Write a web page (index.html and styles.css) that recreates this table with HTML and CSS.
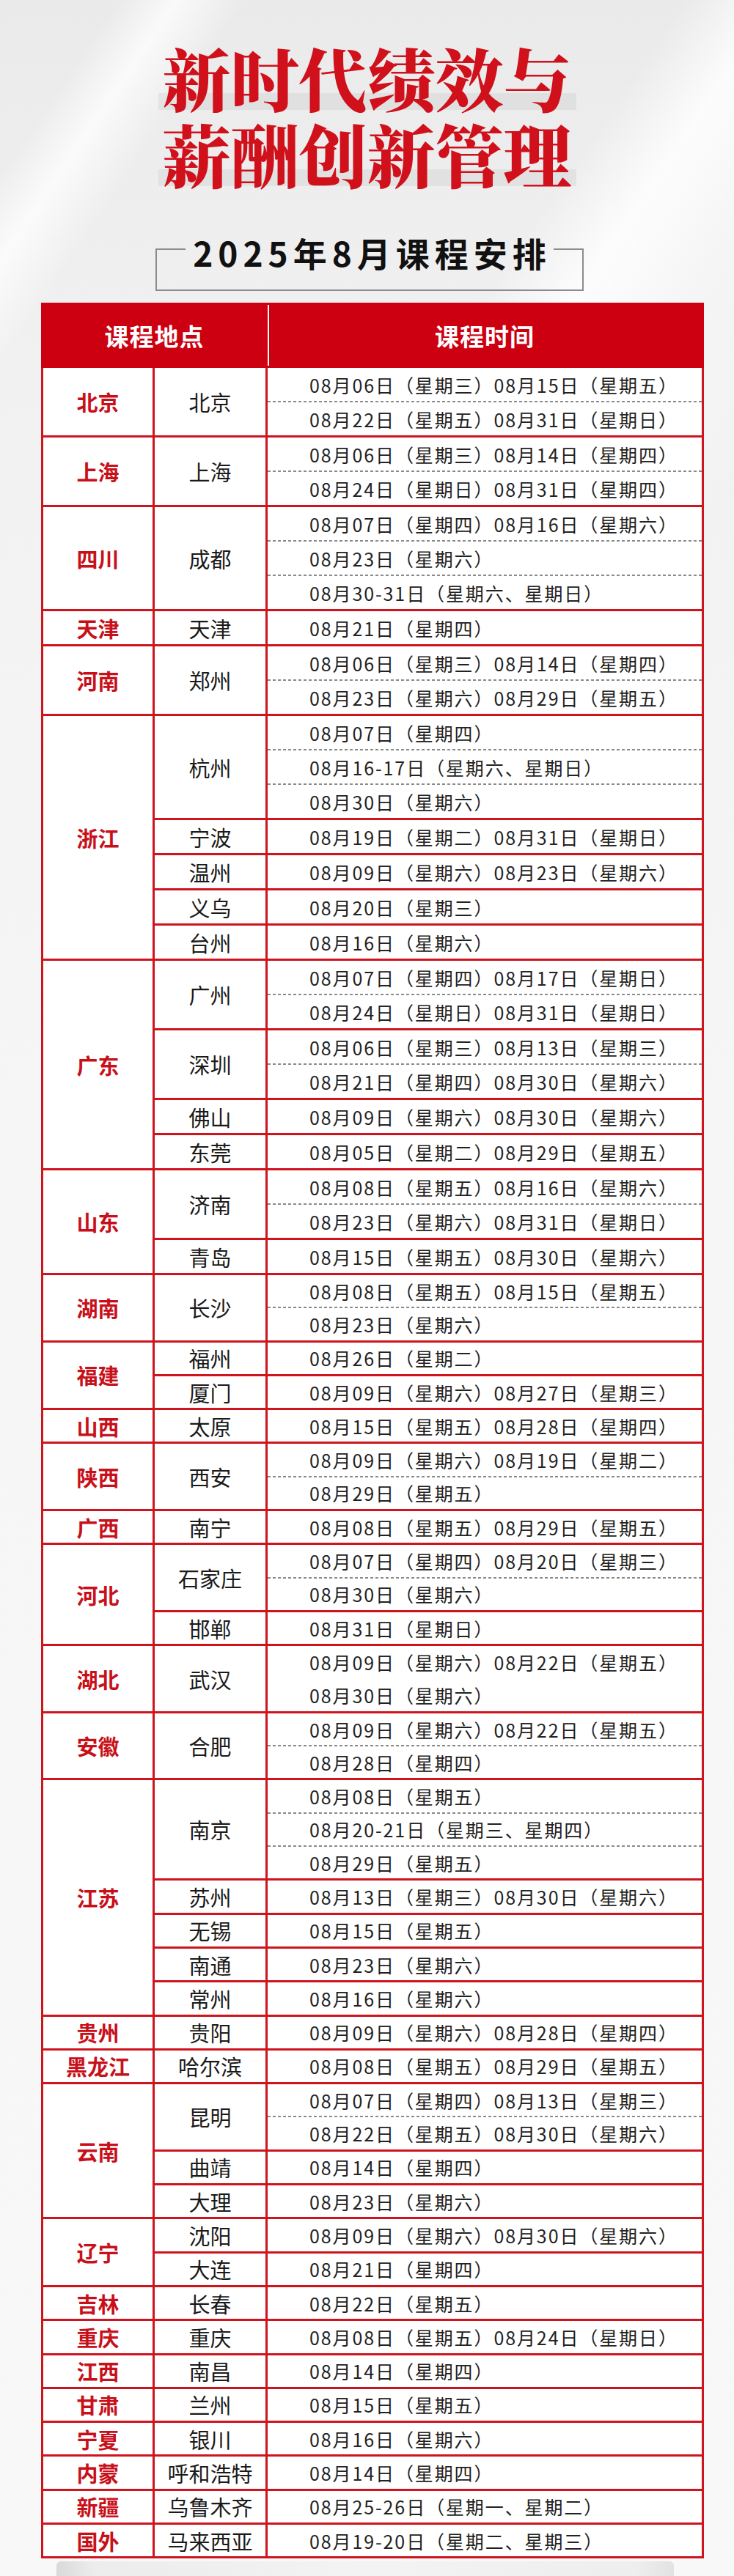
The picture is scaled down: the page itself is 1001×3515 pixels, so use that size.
FILE: index.html
```html
<!DOCTYPE html>
<html lang="zh-CN">
<head>
<meta charset="utf-8">
<title>新时代绩效与薪酬创新管理 · 2025年8月课程安排</title>
<link rel="stylesheet" href="styles.css">
</head>
<body>
<main class="page">
  <h1 class="title">新时代绩效与<br>薪酬创新管理</h1>

  <fieldset class="schedule-frame">
    <legend class="schedule-heading">2025年8月课程安排</legend>
  </fieldset>

  <table class="schedule">
    <colgroup>
      <col class="col-prov">
      <col class="col-city">
      <col class="col-time">
    </colgroup>
    <thead>
      <tr>
        <th colspan="2" class="head-place">课程地点</th>
        <th class="head-time">课程时间</th>
      </tr>
    </thead>
    <tbody>
      <tr>
        <td class="prov">北京</td><td class="city">北京</td>
        <td class="time"><div class="line">08月06日（星期三）08月15日（星期五）</div><div class="line">08月22日（星期五）08月31日（星期日）</div></td>
      </tr>
      <tr>
        <td class="prov">上海</td><td class="city">上海</td>
        <td class="time"><div class="line">08月06日（星期三）08月14日（星期四）</div><div class="line">08月24日（星期日）08月31日（星期四）</div></td>
      </tr>
      <tr>
        <td class="prov">四川</td><td class="city">成都</td>
        <td class="time"><div class="line">08月07日（星期四）08月16日（星期六）</div><div class="line">08月23日（星期六）</div><div class="line">08月30-31日（星期六、星期日）</div></td>
      </tr>
      <tr>
        <td class="prov">天津</td><td class="city">天津</td>
        <td class="time"><div class="line">08月21日（星期四）</div></td>
      </tr>
      <tr>
        <td class="prov">河南</td><td class="city">郑州</td>
        <td class="time"><div class="line">08月06日（星期三）08月14日（星期四）</div><div class="line">08月23日（星期六）08月29日（星期五）</div></td>
      </tr>
      <tr>
        <td class="prov" rowspan="5">浙江</td><td class="city">杭州</td>
        <td class="time"><div class="line">08月07日（星期四）</div><div class="line">08月16-17日（星期六、星期日）</div><div class="line">08月30日（星期六）</div></td>
      </tr>
      <tr>
        <td class="city">宁波</td>
        <td class="time"><div class="line">08月19日（星期二）08月31日（星期日）</div></td>
      </tr>
      <tr>
        <td class="city">温州</td>
        <td class="time"><div class="line">08月09日（星期六）08月23日（星期六）</div></td>
      </tr>
      <tr>
        <td class="city">义乌</td>
        <td class="time"><div class="line">08月20日（星期三）</div></td>
      </tr>
      <tr>
        <td class="city">台州</td>
        <td class="time"><div class="line">08月16日（星期六）</div></td>
      </tr>
      <tr>
        <td class="prov" rowspan="4">广东</td><td class="city">广州</td>
        <td class="time"><div class="line">08月07日（星期四）08月17日（星期日）</div><div class="line">08月24日（星期日）08月31日（星期日）</div></td>
      </tr>
      <tr>
        <td class="city">深圳</td>
        <td class="time"><div class="line">08月06日（星期三）08月13日（星期三）</div><div class="line">08月21日（星期四）08月30日（星期六）</div></td>
      </tr>
      <tr>
        <td class="city">佛山</td>
        <td class="time"><div class="line">08月09日（星期六）08月30日（星期六）</div></td>
      </tr>
      <tr>
        <td class="city">东莞</td>
        <td class="time"><div class="line">08月05日（星期二）08月29日（星期五）</div></td>
      </tr>
      <tr>
        <td class="prov" rowspan="2">山东</td><td class="city">济南</td>
        <td class="time"><div class="line">08月08日（星期五）08月16日（星期六）</div><div class="line">08月23日（星期六）08月31日（星期日）</div></td>
      </tr>
      <tr>
        <td class="city">青岛</td>
        <td class="time"><div class="line">08月15日（星期五）08月30日（星期六）</div></td>
      </tr>
      <tr>
        <td class="prov">湖南</td><td class="city">长沙</td>
        <td class="time"><div class="line">08月08日（星期五）08月15日（星期五）</div><div class="line">08月23日（星期六）</div></td>
      </tr>
      <tr>
        <td class="prov" rowspan="2">福建</td><td class="city">福州</td>
        <td class="time"><div class="line">08月26日（星期二）</div></td>
      </tr>
      <tr>
        <td class="city">厦门</td>
        <td class="time"><div class="line">08月09日（星期六）08月27日（星期三）</div></td>
      </tr>
      <tr>
        <td class="prov">山西</td><td class="city">太原</td>
        <td class="time"><div class="line">08月15日（星期五）08月28日（星期四）</div></td>
      </tr>
      <tr>
        <td class="prov">陕西</td><td class="city">西安</td>
        <td class="time"><div class="line">08月09日（星期六）08月19日（星期二）</div><div class="line">08月29日（星期五）</div></td>
      </tr>
      <tr>
        <td class="prov">广西</td><td class="city">南宁</td>
        <td class="time"><div class="line">08月08日（星期五）08月29日（星期五）</div></td>
      </tr>
      <tr>
        <td class="prov" rowspan="2">河北</td><td class="city">石家庄</td>
        <td class="time"><div class="line">08月07日（星期四）08月20日（星期三）</div><div class="line">08月30日（星期六）</div></td>
      </tr>
      <tr>
        <td class="city">邯郸</td>
        <td class="time"><div class="line">08月31日（星期日）</div></td>
      </tr>
      <tr>
        <td class="prov">湖北</td><td class="city">武汉</td>
        <td class="time time--plain"><div class="line">08月09日（星期六）08月22日（星期五）</div><div class="line">08月30日（星期六）</div></td>
      </tr>
      <tr>
        <td class="prov">安徽</td><td class="city">合肥</td>
        <td class="time"><div class="line">08月09日（星期六）08月22日（星期五）</div><div class="line">08月28日（星期四）</div></td>
      </tr>
      <tr>
        <td class="prov" rowspan="5">江苏</td><td class="city">南京</td>
        <td class="time"><div class="line">08月08日（星期五）</div><div class="line">08月20-21日（星期三、星期四）</div><div class="line">08月29日（星期五）</div></td>
      </tr>
      <tr>
        <td class="city">苏州</td>
        <td class="time"><div class="line">08月13日（星期三）08月30日（星期六）</div></td>
      </tr>
      <tr>
        <td class="city">无锡</td>
        <td class="time"><div class="line">08月15日（星期五）</div></td>
      </tr>
      <tr>
        <td class="city">南通</td>
        <td class="time"><div class="line">08月23日（星期六）</div></td>
      </tr>
      <tr>
        <td class="city">常州</td>
        <td class="time"><div class="line">08月16日（星期六）</div></td>
      </tr>
      <tr>
        <td class="prov">贵州</td><td class="city">贵阳</td>
        <td class="time"><div class="line">08月09日（星期六）08月28日（星期四）</div></td>
      </tr>
      <tr>
        <td class="prov">黑龙江</td><td class="city">哈尔滨</td>
        <td class="time"><div class="line">08月08日（星期五）08月29日（星期五）</div></td>
      </tr>
      <tr>
        <td class="prov" rowspan="3">云南</td><td class="city">昆明</td>
        <td class="time"><div class="line">08月07日（星期四）08月13日（星期三）</div><div class="line">08月22日（星期五）08月30日（星期六）</div></td>
      </tr>
      <tr>
        <td class="city">曲靖</td>
        <td class="time"><div class="line">08月14日（星期四）</div></td>
      </tr>
      <tr>
        <td class="city">大理</td>
        <td class="time"><div class="line">08月23日（星期六）</div></td>
      </tr>
      <tr>
        <td class="prov" rowspan="2">辽宁</td><td class="city">沈阳</td>
        <td class="time"><div class="line">08月09日（星期六）08月30日（星期六）</div></td>
      </tr>
      <tr>
        <td class="city">大连</td>
        <td class="time"><div class="line">08月21日（星期四）</div></td>
      </tr>
      <tr>
        <td class="prov">吉林</td><td class="city">长春</td>
        <td class="time"><div class="line">08月22日（星期五）</div></td>
      </tr>
      <tr>
        <td class="prov">重庆</td><td class="city">重庆</td>
        <td class="time"><div class="line">08月08日（星期五）08月24日（星期日）</div></td>
      </tr>
      <tr>
        <td class="prov">江西</td><td class="city">南昌</td>
        <td class="time"><div class="line">08月14日（星期四）</div></td>
      </tr>
      <tr>
        <td class="prov">甘肃</td><td class="city">兰州</td>
        <td class="time"><div class="line">08月15日（星期五）</div></td>
      </tr>
      <tr>
        <td class="prov">宁夏</td><td class="city">银川</td>
        <td class="time"><div class="line">08月16日（星期六）</div></td>
      </tr>
      <tr>
        <td class="prov">内蒙</td><td class="city">呼和浩特</td>
        <td class="time"><div class="line">08月14日（星期四）</div></td>
      </tr>
      <tr>
        <td class="prov">新疆</td><td class="city">乌鲁木齐</td>
        <td class="time"><div class="line">08月25-26日（星期一、星期二）</div></td>
      </tr>
      <tr>
        <td class="prov">国外</td><td class="city">马来西亚</td>
        <td class="time"><div class="line">08月19-20日（星期二、星期三）</div></td>
      </tr>
    </tbody>
  </table>

  <div class="photo-peek"></div>
</main>
</body>
</html>
```

FILE: styles.css
```css
* {
  box-sizing: border-box;
}

html,
body {
  margin: 0;
}

body {
  width: 1001px;
  min-height: 3515px;
  font-family: "Noto Sans CJK SC", "Noto Sans", "Liberation Sans", sans-serif;
  color: #1c1c1c;
  background:
    linear-gradient(124deg, transparent 0 10%, rgba(255, 255, 255, 0.75) 15%, transparent 21%) 0 0 / 1001px 900px no-repeat,
    linear-gradient(124deg, transparent 0 58%, rgba(255, 255, 255, 0.85) 66%, rgba(250, 250, 250, 0.6) 75%, transparent 90%) 0 0 / 1001px 900px no-repeat,
    linear-gradient(#eaeaea 0, #f1f1f1 500px, #f6f6f6 1500px, #f8f8f8 100%);
}

.page {
  padding-top: 62px;
}

/* ---------- title ---------- */
.title {
  width: fit-content;
  margin: 0 auto;
  padding: 0 6px;
  text-align: center;
  font-family: "Liberation Serif", "Noto Serif CJK SC", "Noto Sans CJK SC", serif;
  font-size: 93px;
  font-weight: 900;
  line-height: 104px;
  color: #d0101b;
  background: repeating-linear-gradient(to bottom,
      transparent 0 65px,
      rgba(0, 0, 0, 0.05) 65px 88px,
      transparent 88px 104px);
}

/* ---------- framed subtitle ---------- */
.schedule-frame {
  width: 584px;
  min-width: 0;
  margin: 38px 0 0 212px;
  padding: 0 0 23px;
  border: 2px solid #8c8c8c;
}

.schedule-heading {
  margin: 0 auto;
  padding: 8px 3px 0 10px;
  font-size: 46px;
  font-weight: 700;
  line-height: 56px;
  letter-spacing: 7px;
  color: #111;
}

/* ---------- table ---------- */
.schedule {
  margin: 16px 0 0 56px;
  width: 904px;
  table-layout: fixed;
  border-collapse: collapse;
}

.col-prov {
  width: 152px;
}

.col-city {
  width: 154px;
}

.schedule th {
  height: 86px;
  padding: 0;
  background: #cc0011;
  border: 3px solid #cc0011;
  color: #fff;
  font-size: 33px;
  font-weight: 700;
  letter-spacing: 1px;
}

.head-time {
  box-shadow: inset 2px 0 0 #fff;
}

.schedule tbody {
  --lh: 43.3px;
}

.schedule tbody tr:nth-child(-n+16) {
  --lh: 45px;
}

.schedule td {
  padding: 0;
  border: 3px solid #d0141d;
  background: #fff;
  text-align: center;
  vertical-align: middle;
}

.prov {
  font-size: 29px;
  font-weight: 700;
  color: #c8101a;
}

.city {
  font-size: 29px;
  color: #1a1a1a;
}

.schedule td.time {
  text-align: left;
}

.line {
  display: flex;
  align-items: center;
  height: var(--lh);
  padding-left: 57px;
  font-size: 25px;
  letter-spacing: 1.9px;
  white-space: nowrap;
  color: #222;
}

.line + .line {
  height: calc(var(--lh) + 2px);
  padding-top: 2px;
  background: repeating-linear-gradient(90deg, #8a8a8a 0 4px, transparent 4px 7px) 0 0 / 100% 2px no-repeat;
}

.time--plain .line + .line {
  background: none;
}

/* ---------- next picture peeking in ---------- */
.photo-peek {
  height: 30px;
  margin: 4px 82px 0 77px;
  border-radius: 6px 6px 0 0;
  background: linear-gradient(90deg, #d9d9d9 0, #ececec 6%, #f3f3f3 50%, #eeeeee 94%, #e2e2e2 100%);
}
```
